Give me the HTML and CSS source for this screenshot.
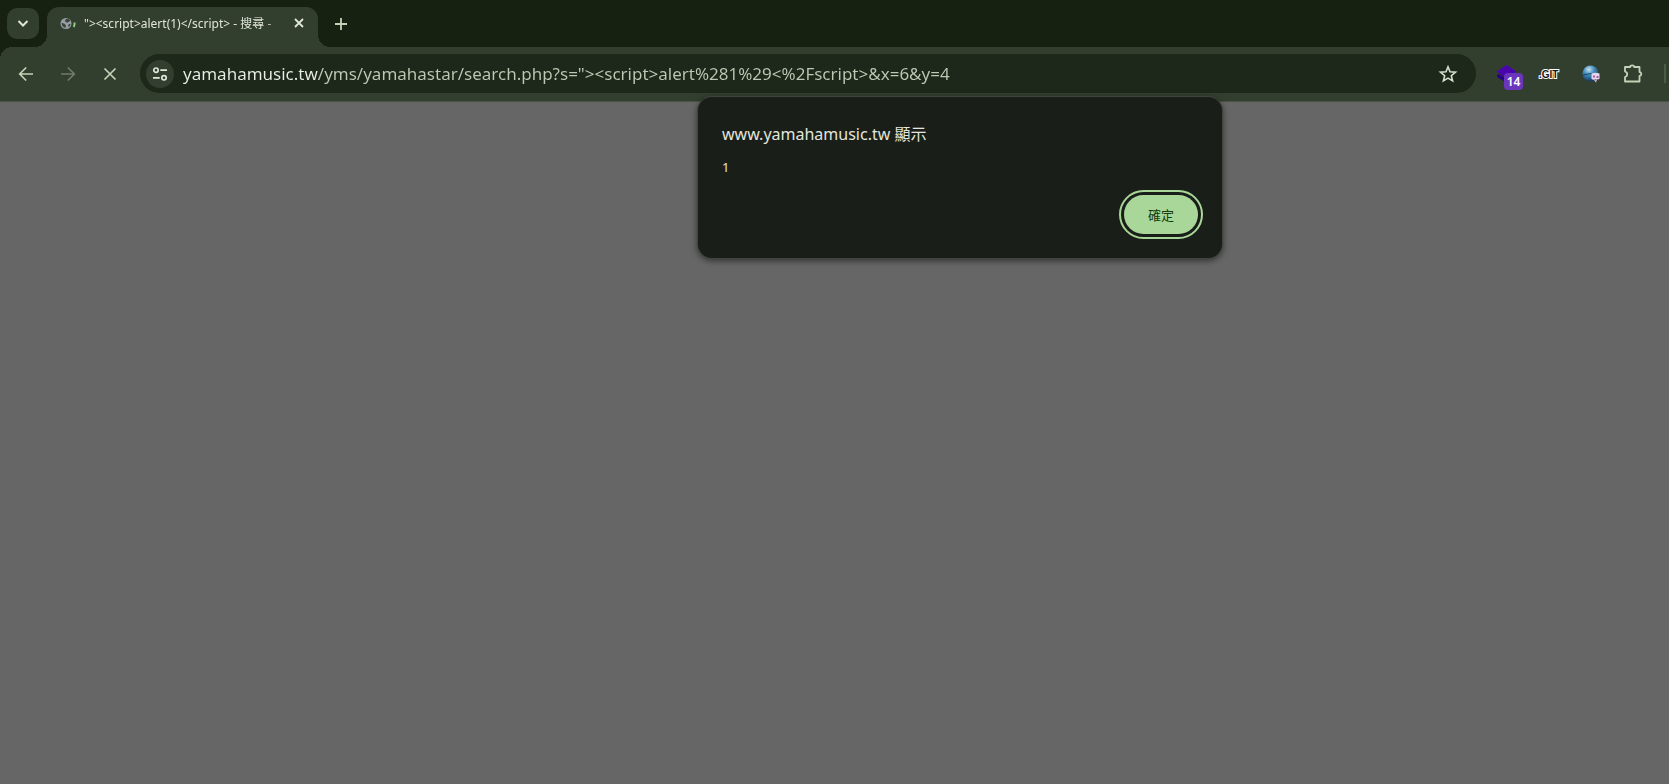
FILE: index.html
```html
<!DOCTYPE html>
<html lang="zh-Hant">
<head>
<meta charset="utf-8">
<title>"&gt;&lt;script&gt;alert(1)&lt;/script&gt; - 搜尋</title>
<link rel="stylesheet" href="styles.css">
</head>
<body>
<header class="browser">
  <div class="tab-strip">
    <button class="tab-search" aria-label="搜尋分頁"><svg width="16" height="16" viewBox="0 0 16 16"><path d="M3.500 5L8 9.500l4.500-4.500" fill="none" stroke="currentColor" stroke-width="2"/></svg></button>
    <div class="tab">
      <svg class="favicon" width="16" height="14" viewBox="0 0 16 14"><circle cx="6" cy="7.500" r="5.500" fill="#969da6"/><path d="M1.600 6.800l2.800 1 1.600 1.500-.6 2.800C3 11.500 1.400 9.300 1.600 6.800zM6 3l2.500-.2 1.800 2-2.500 1.700-1.900-.2-1-1.300zM8.500 8.300l2-.3-.6 2-1.700 1z" fill="#3b4638"/><path d="M14.600 6.500c.1 1.800-.2 3.200-.9 4.500" fill="none" stroke="#8fd07e" stroke-width="2"/></svg>
      <span class="tab-title">"&gt;&lt;script&gt;alert(1)&lt;/script&gt; - 搜尋 - </span>
      <button class="tab-close" aria-label="關閉分頁"><svg width="12" height="12" viewBox="0 0 12 12"><path d="M2 2l8 8M10 2l-8 8" stroke="currentColor" stroke-width="1.800"/></svg></button>
    </div>
    <button class="new-tab" aria-label="新分頁"><svg width="14" height="14" viewBox="0 0 14 14"><path d="M7 1v12M1 7h12" stroke="currentColor" stroke-width="1.800"/></svg></button>
  </div>
  <div class="toolbar">
    <nav class="nav">
      <button aria-label="上一頁"><svg width="18" height="18" viewBox="0 0 18 18"><path d="M16 9H3M9.200 2.500L2.700 9l6.500 6.500" fill="none" stroke="currentColor" stroke-width="1.700"/></svg></button>
      <button aria-label="下一頁" disabled><svg width="18" height="18" viewBox="0 0 18 18"><path d="M2 9h13M8.800 2.500L15.300 9l-6.500 6.500" fill="none" stroke="currentColor" stroke-width="1.700"/></svg></button>
      <button aria-label="停止載入"><svg width="18" height="18" viewBox="0 0 18 18"><path d="M3.500 3.500l11 11M14.500 3.500l-11 11" stroke="currentColor" stroke-width="1.700"/></svg></button>
    </nav>
    <div class="omnibox">
      <button class="site-info" aria-label="網站資訊"><svg width="16" height="16" viewBox="0 0 16 16"><g fill="none" stroke="currentColor" stroke-width="1.700"><circle cx="4" cy="4.200" r="2.200"/><path d="M8.300 4.200H15M1 11.800h6.700"/><circle cx="12" cy="11.800" r="2.200"/></g></svg></button>
      <input class="url" type="text" aria-label="網址列" spellcheck="false" value="yamahamusic.tw/yms/yamahastar/search.php?s=&quot;&gt;&lt;script&gt;alert%281%29&lt;%2Fscript&gt;&amp;x=6&amp;y=4">
      <button class="bookmark" aria-label="加入書籤"><svg width="20" height="20" viewBox="0 0 20 20"><path d="M10 2.800l2 5 5.500.4-4.200 3.500 1.300 5.200L10 14.100l-4.600 2.800 1.300-5.200-4.200-3.500L8 7.800z" fill="none" stroke="currentColor" stroke-width="1.600"/></svg></button>
    </div>
    <div class="extensions">
      <button aria-label="擴充功能，14 則"><svg width="22" height="18" viewBox="0 0 22 18"><path d="M1 10.300L3 9l8 5v4L1 12z" fill="#2c0284"/><path d="M10.500 0l10 6.500-10 6.500-10-6.500z" fill="#4b05ad"/></svg><span class="badge">14</span></button>
      <button aria-label="Git"><svg width="22" height="16" viewBox="0 0 22 16"><text class="git" x="1" y="12">.GIT</text></svg></button>
      <button aria-label="地球"><svg width="20" height="20" viewBox="0 0 20 20"><defs><radialGradient id="ball" cx=".4" cy=".25" r=".8"><stop offset="0" stop-color="#c5e2f0"/><stop offset=".4" stop-color="#4690c0"/><stop offset="1" stop-color="#0b2f52"/></radialGradient></defs><circle cx="9.500" cy="9.500" r="8" fill="url(#ball)"/><path d="M2 11q6-2 13-1" stroke="#17466c" fill="none"/><path d="M10.500 9.500q4-1.500 8 0v5.500l-2.500.5-1 3-2-2.500-2.500-1z" fill="#e5d5e9"/><path d="M12 11.500h2v2h-2zM15.500 12h2v2h-2zM13.500 15h2v1.500h-2z" fill="#9e62ac"/></svg></button>
      <button aria-label="擴充功能"><svg width="22" height="22" viewBox="0 0 22 22"><path d="M3 4H8.200Q8.200 2.300 10.200 2.300T12.200 4H17.500V9Q19.300 9.300 19.300 11T17.500 13V18.500H3V14Q5.200 13.300 5.200 11.200T3 8.500z" fill="none" stroke="currentColor" stroke-width="1.800" stroke-linejoin="round"/></svg></button>
    </div>
    <span class="divider"></span>
  </div>
</header>
<main class="page"></main>
<dialog class="alert" open aria-labelledby="alert-title">
  <h1 class="alert-title" id="alert-title">www.yamahamusic.tw 顯示</h1>
  <p class="alert-text">1</p>
  <form class="alert-actions" method="dialog"><button class="ok">確定</button></form>
</dialog>
</body>
</html>
```
FILE: styles.css
```css
* { box-sizing: border-box; }

body {
  margin: 0;
  min-height: 100vh;
  display: flex;
  flex-direction: column;
  overflow: hidden;
  background: #666;
  font-family: "Noto Sans", "Noto Sans CJK TC", sans-serif;
}

button {
  display: grid;
  place-items: center;
  padding: 0;
  border: 0;
  background: none;
  color: #c2d3b8;
  font: inherit;
}

svg { display: block; }

.tab-strip {
  display: flex;
  align-items: center;
  height: 47px;
  padding-left: 7px;
  background: #172112;
}

.tab-search {
  width: 32px;
  height: 31px;
  border-radius: 10px;
  background: #333f2e;
  color: #e0e6db;
}

.tab {
  position: relative;
  align-self: flex-end;
  display: flex;
  align-items: center;
  width: 271px;
  height: 40px;
  margin-left: 8px;
  padding: 0 12px 8px 13px;
  border-radius: 12px 12px 0 0;
  background: #333f2e;
}

.tab::before,
.tab::after {
  content: "";
  position: absolute;
  bottom: 0;
  width: 12px;
  height: 12px;
}

.tab::before {
  right: 100%;
  background: radial-gradient(circle at 0 0, transparent 12px, #333f2e 12px);
}

.tab::after {
  left: 100%;
  background: radial-gradient(circle at 100% 0, transparent 12px, #333f2e 12px);
}

.tab-title {
  flex: 1;
  margin-left: 8px;
  padding-top: 2px;
  overflow: hidden;
  white-space: nowrap;
  font-size: 12px;
  line-height: 20px;
  color: #e0e6db;
  mask-image: linear-gradient(to right, #000 85%, transparent);
}

.tab-close {
  width: 14px;
  height: 20px;
  color: #e0e6db;
}

.new-tab {
  width: 32px;
  height: 32px;
  margin-left: 7px;
}

.toolbar {
  display: flex;
  align-items: center;
  height: 55px;
  padding: 0 0 1px 9px;
  border-bottom: 1px solid #4a5146;
  background: radial-gradient(circle at 12px 12px, #333f2e 12px, #172112 12px) 0 0 / 12px 12px no-repeat #333f2e;
}

.nav { display: flex; gap: 8px; }

.nav button { width: 34px; height: 34px; }

.nav button:disabled { color: #6f7a69; }

.omnibox {
  flex: 1;
  display: flex;
  align-items: center;
  height: 39px;
  margin-left: 13px;
  padding: 0 18px 0 6px;
  border-radius: 20px;
  background: #1d271a;
}

.site-info {
  width: 28px;
  height: 28px;
  border-radius: 50%;
  background: #333f2e;
  color: #e0e6db;
}

.url {
  flex: 1;
  min-width: 0;
  height: 28px;
  margin-left: 9px;
  padding: 0;
  border: 0;
  outline: 0;
  background: linear-gradient(to right, #e8eee3 136px, #bccab4 136px) text;
  color: #bccab4;
  -webkit-text-fill-color: transparent;
  font-family: inherit;
  font-size: 17px;
}

.bookmark {
  width: 20px;
  height: 20px;
  color: #d5dfce;
}

.extensions {
  display: flex;
  gap: 12px;
  margin: 0 16px;
}

.extensions button {
  position: relative;
  width: 30px;
  height: 36px;
}

.badge {
  position: absolute;
  left: 12px;
  top: 17px;
  width: 19px;
  height: 17px;
  border-radius: 4px;
  background: #6a36bb;
  color: #fff;
  font-size: 12px;
  font-weight: 600;
  line-height: 17px;
  text-align: center;
}

.git {
  font: bold 10px "Liberation Sans", sans-serif;
  fill: #161616;
  stroke: #fff;
  stroke-width: 2px;
  paint-order: stroke;
}

.divider {
  width: 2px;
  height: 19px;
  margin-right: 3px;
  background: #4a5a43;
}

.page { flex: 1; background: #666; }

.alert {
  position: absolute;
  top: 97px;
  left: 698px;
  width: 524px;
  margin: 0;
  padding: 24px;
  border: 0;
  border-radius: 14px;
  background: #1a1e19;
  box-shadow: 0 0 0 1px #3f443c, 0 2px 6px 1px rgba(0, 0, 0, .5);
  color: #e2e6de;
}

.alert-title {
  margin: 0;
  font-size: 16px;
  font-weight: 400;
  line-height: 26px;
}

.alert-text {
  margin: 10px 0 0;
  font-size: 13px;
  line-height: 20px;
}

.alert-actions {
  display: flex;
  justify-content: flex-end;
  margin-top: 18px;
}

.ok {
  width: 74px;
  height: 39px;
  border-radius: 20px;
  outline: 2px solid #a9d799;
  outline-offset: 3px;
  background: #a9d799;
  color: #133b0c;
  font-size: 13px;
}
```
